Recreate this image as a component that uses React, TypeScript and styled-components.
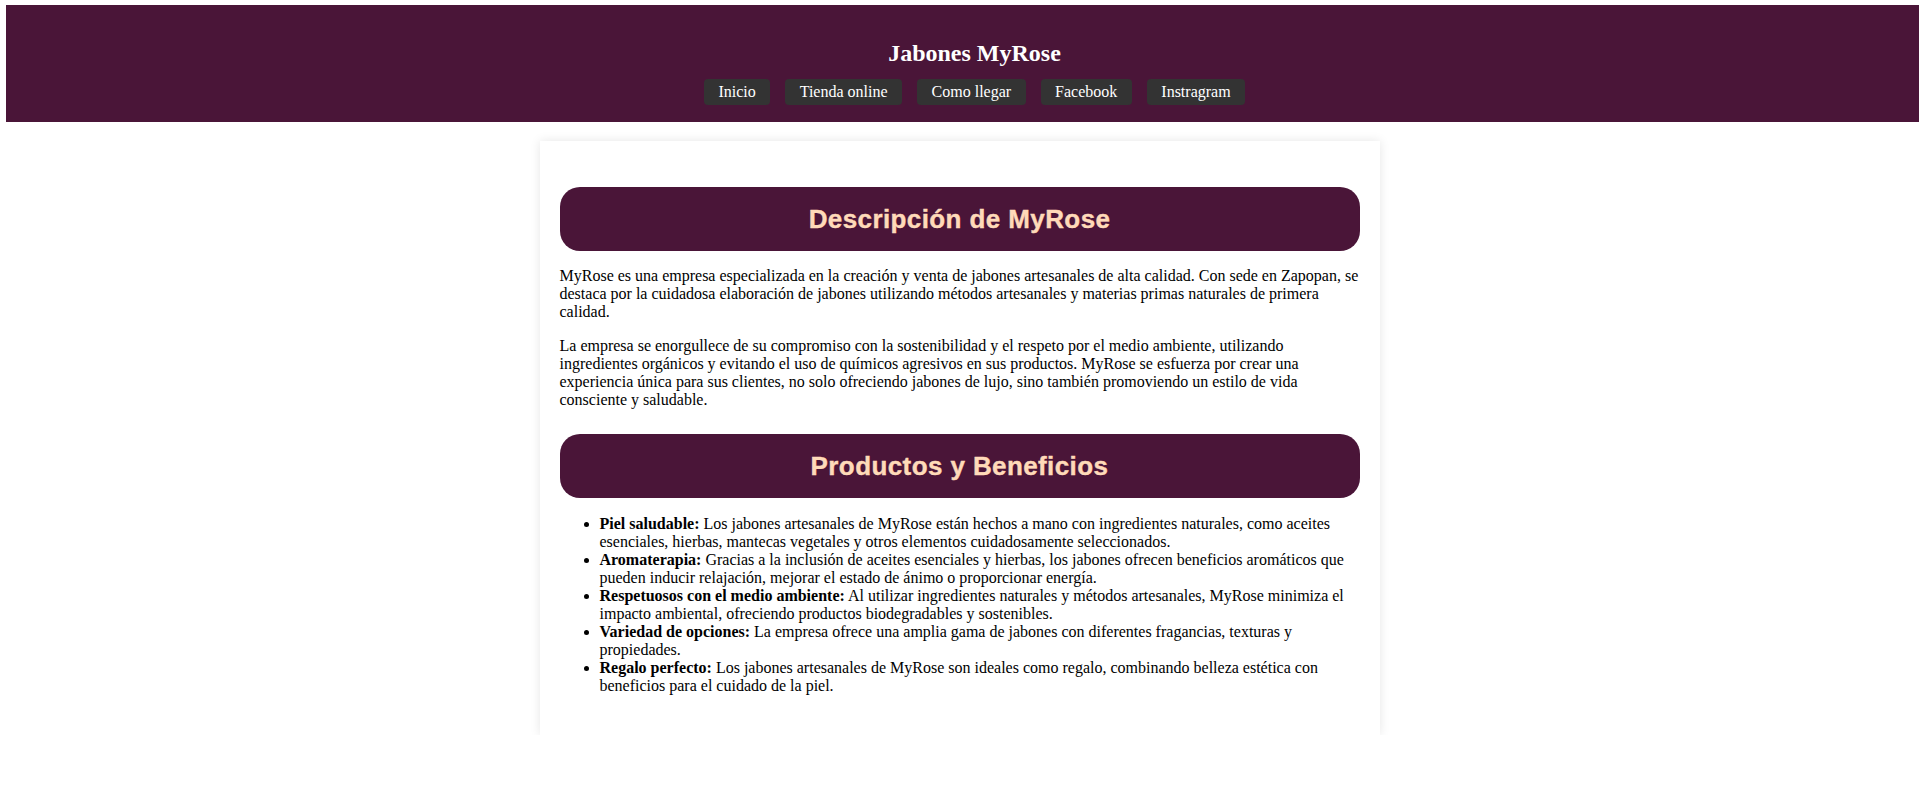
import React from "react";
import styled, { createGlobalStyle } from "styled-components";

const GlobalStyle = createGlobalStyle`
  html, body {
    margin: 0;
    padding: 0;
    background: #ffffff;
    font-family: "Liberation Serif", "Times New Roman", serif;
    font-size: 16px;
    color: #000000;
  }
`;

const Page = styled.div`
  display: flex;
  flex-direction: column;
  padding-top: 5px;
`;

const Header = styled.header`
  margin-left: 6px;
  background: #4a1538;
  color: #ffffff;
  display: flex;
  flex-direction: column;
  align-items: center;
  padding: 34px 0 17px 24px;
`;

const Title = styled.h1`
  margin: 0 0 12px;
  font-size: 24px;
  line-height: 28px;
  font-weight: bold;
`;

const Nav = styled.nav`
  display: flex;
  gap: 15px;
`;

const NavLink = styled.a`
  display: block;
  background: #333333;
  color: #ffffff;
  text-decoration: none;
  font-size: 16px;
  line-height: 18px;
  padding: 4px 14.5px;
  border-radius: 4px;
`;

const Card = styled.main`
  box-sizing: border-box;
  width: 840px;
  margin: 19px auto 0;
  padding: 21px 20px 24px;
  background: #ffffff;
  box-shadow: 0 0 10px rgba(0, 0, 0, 0.1);
`;

const SectionTitle = styled.h2`
  margin: 25px 0 16px;
  padding: 17px 10px;
  background: #4a1538;
  color: #ffdab9;
  border-radius: 20px;
  text-align: center;
  font-family: "Liberation Sans", Arial, sans-serif;
  font-weight: bold;
  font-size: 26px;
  line-height: 30px;
  letter-spacing: 0.4px;
  -webkit-text-stroke: 0.4px #ffdab9;
`;

const Paragraph = styled.p`
  margin: 16px 0;
  line-height: normal;
`;

const List = styled.ul`
  margin: 17px 0 16px;
  padding-left: 40px;
`;

const Item = styled.li`
  line-height: normal;
`;

const links = ["Inicio", "Tienda online", "Como llegar", "Facebook", "Instragram"];

const benefits: { title: string; text: string }[] = [
  {
    title: "Piel saludable:",
    text: "Los jabones artesanales de MyRose están hechos a mano con ingredientes naturales, como aceites esenciales, hierbas, mantecas vegetales y otros elementos cuidadosamente seleccionados.",
  },
  {
    title: "Aromaterapia:",
    text: "Gracias a la inclusión de aceites esenciales y hierbas, los jabones ofrecen beneficios aromáticos que pueden inducir relajación, mejorar el estado de ánimo o proporcionar energía.",
  },
  {
    title: "Respetuosos con el medio ambiente:",
    text: "Al utilizar ingredientes naturales y métodos artesanales, MyRose minimiza el impacto ambiental, ofreciendo productos biodegradables y sostenibles.",
  },
  {
    title: "Variedad de opciones:",
    text: "La empresa ofrece una amplia gama de jabones con diferentes fragancias, texturas y propiedades.",
  },
  {
    title: "Regalo perfecto:",
    text: "Los jabones artesanales de MyRose son ideales como regalo, combinando belleza estética con beneficios para el cuidado de la piel.",
  },
];

export default function App() {
  return (
    <>
      <GlobalStyle />
      <Page>
        <Header>
          <Title>Jabones MyRose</Title>
          <Nav>
            {links.map((l) => (
              <NavLink key={l} href="#">
                {l}
              </NavLink>
            ))}
          </Nav>
        </Header>
        <Card>
          <SectionTitle>Descripción de MyRose</SectionTitle>
          <Paragraph>
            MyRose es una empresa especializada en la creación y venta de jabones artesanales de alta calidad. Con sede en
            Zapopan, se destaca por la cuidadosa elaboración de jabones utilizando métodos artesanales y materias primas
            naturales de primera calidad.
          </Paragraph>
          <Paragraph>
            La empresa se enorgullece de su compromiso con la sostenibilidad y el respeto por el medio ambiente, utilizando
            ingredientes orgánicos y evitando el uso de químicos agresivos en sus productos. MyRose se esfuerza por crear una
            experiencia única para sus clientes, no solo ofreciendo jabones de lujo, sino también promoviendo un estilo de
            vida consciente y saludable.
          </Paragraph>
          <SectionTitle>Productos y Beneficios</SectionTitle>
          <List>
            {benefits.map((b) => (
              <Item key={b.title}>
                <strong>{b.title}</strong> {b.text}
              </Item>
            ))}
          </List>
        </Card>
      </Page>
    </>
  );
}
